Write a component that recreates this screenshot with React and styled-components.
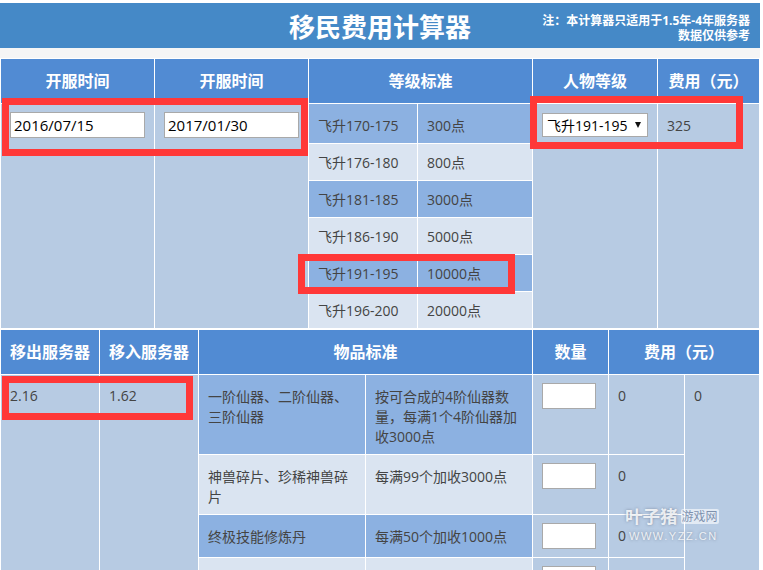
import React from "react";
import styled, { createGlobalStyle } from "styled-components";

const Global = createGlobalStyle`
  html, body { margin: 0; padding: 0; background: #fff; overflow: hidden; height: 570px; }
  body { font-family: "Open Sans", "Noto Sans CJK SC", sans-serif; font-size: 14px; color: #444; }
`;

const Page = styled.div`
  position: relative;
  width: 763px;
  height: 570px;
  overflow: hidden;
  padding-top: 3px;
  box-sizing: border-box;
`;

const Banner = styled.header`
  width: 760px;
  height: 45px;
  background: #4589c7;
  display: grid;
  grid-template-columns: 1fr auto 1fr;
  align-items: center;
  color: #fff;
`;

const Title = styled.h1`
  grid-column: 2;
  margin: 0;
  padding-top: 4px;
  font-size: 26px;
  line-height: 41px;
  font-weight: 700;
`;

const Note = styled.div`
  grid-column: 3;
  justify-self: end;
  padding: 4px 10px 0 0;
  font-size: 12px;
  line-height: 15px;
  font-weight: 700;
  text-align: right;
  white-space: nowrap;
`;

const Gap = styled.div`
  width: 760px;
  height: 10px;
  background: #f5f5f5;
`;

const Table = styled.table`
  width: 760px;
  table-layout: fixed;
  border-collapse: separate;
  border-spacing: 1px;
  background: #fff;
`;

const Head = styled.th`
  box-sizing: border-box;
  height: 44px;
  padding: 0 0 2px;
  background: #518bd3;
  color: #fff;
  font-size: 16px;
  font-weight: 700;
  text-align: center;
  white-space: nowrap;
`;

const Cell = styled.td`
  box-sizing: border-box;
  height: ${(p) => p.$h || 36}px;
  padding: ${(p) => p.$pt ?? 9}px 9px 0;
  vertical-align: top;
  line-height: 20px;
  background: ${(p) =>
    p.$tone === "dark" ? "#8cb1e1" : p.$tone === "light" ? "#dae4f1" : "#b7cbe3"};
`;

const FieldCell = styled.td`
  box-sizing: border-box;
  padding: 8px 9px 0;
  vertical-align: top;
  background: #b7cbe3;
`;

const Field = styled.input`
  display: block;
  box-sizing: border-box;
  width: ${(p) => p.$w}px;
  height: 26px;
  padding: 0 3px;
  margin: 0;
  border: 1px solid #a9a9a9;
  border-radius: 0;
  outline: none;
  background: #fff;
  color: #000;
  font-family: "Open Sans", "Noto Sans CJK SC", sans-serif;
  font-size: 15px;
`;

const SelectWrap = styled.div`
  position: relative;
  width: 106px;
  height: 24px;
  margin-top: 1px;
  &::after {
    content: "";
    position: absolute;
    right: 7px;
    top: 9px;
    border-left: 3.5px solid transparent;
    border-right: 3.5px solid transparent;
    border-top: 6px solid #111;
    pointer-events: none;
  }
`;

const Select = styled.select`
  appearance: none;
  display: block;
  box-sizing: border-box;
  width: 106px;
  height: 24px;
  padding: 0 0 0 4px;
  margin: 0;
  border: 1px solid #a9a9a9;
  border-radius: 0;
  background: #fff;
  color: #000;
  font-family: "Open Sans", "Noto Sans CJK SC", sans-serif;
  font-size: 14px;
`;

const Mark = styled.div`
  position: absolute;
  left: ${(p) => p.$x}px;
  top: ${(p) => p.$y}px;
  width: ${(p) => p.$w}px;
  height: ${(p) => p.$h}px;
  box-sizing: border-box;
  border: 7px solid #ff3838;
  pointer-events: none;
`;

const Watermark = styled.div`
  position: absolute;
  left: 625px;
  top: 506px;
  width: 96px;
  color: rgba(255, 255, 255, 0.82);
  text-shadow: 0 0 3px rgba(80, 90, 110, 0.55);
  pointer-events: none;
`;

const WatermarkTop = styled.div`
  display: flex;
  align-items: center;
  gap: 3px;
  height: 21px;
  font-size: 17.5px;
  line-height: 21px;
  font-weight: 700;
  white-space: nowrap;
`;

const WatermarkBadge = styled.span`
  flex: none;
  width: 38px;
  height: 15px;
  background: rgba(255, 255, 255, 0.6);
  color: rgba(120, 140, 170, 0.95);
  border-radius: 2px;
  font-size: 12px;
  line-height: 15px;
  font-weight: 400;
  text-align: center;
  text-shadow: none;
`;

const WatermarkUrl = styled.div`
  padding: 2px 0 0 4px;
  font-family: "Liberation Sans", sans-serif;
  font-size: 11px;
  line-height: 14px;
  letter-spacing: 1.55px;
  white-space: nowrap;
`;

const levels = [
  ["飞升170-175", "300点", 39, 12],
  ["飞升176-180", "800点", 36, 9],
  ["飞升181-185", "3000点", 36, 9],
  ["飞升186-190", "5000点", 36, 9],
  ["飞升191-195", "10000点", 36, 9],
  ["飞升196-200", "20000点", 36, 9],
];

const items = [
  ["一阶仙器、二阶仙器、三阶仙器", "按可合成的4阶仙器数量，每满1个4阶仙器加收3000点", 79],
  ["神兽碎片、珍稀神兽碎片", "每满99个加收3000点", 59],
  ["终极技能修炼丹", "每满50个加收1000点", 42],
  ["", "", 60],
];

const tone = (i) => (i % 2 === 0 ? "dark" : "light");

export default function App() {
  return (
    <Page>
      <Global />
      <Banner>
        <Title>移民费用计算器</Title>
        <Note>
          注：本计算器只适用于1.5年-4年服务器
          <br />
          数据仅供参考
        </Note>
      </Banner>
      <Gap />
      <Table>
        <colgroup>
          {[153, 153, 108, 114, 124, 101].map((w, i) => (
            <col key={i} width={w} />
          ))}
        </colgroup>
        <thead>
          <tr>
            <Head>开服时间</Head>
            <Head>开服时间</Head>
            <Head colSpan={2}>等级标准</Head>
            <Head>人物等级</Head>
            <Head>费用（元）</Head>
          </tr>
        </thead>
        <tbody>
          {levels.map(([name, pts, h, pt], i) => (
            <tr key={name}>
              {i === 0 && (
                <>
                  <FieldCell rowSpan={6}>
                    <Field $w={135} defaultValue="2016/07/15" />
                  </FieldCell>
                  <FieldCell rowSpan={6}>
                    <Field $w={135} defaultValue="2017/01/30" />
                  </FieldCell>
                </>
              )}
              <Cell $h={h} $pt={pt} $tone={tone(i)}>{name}</Cell>
              <Cell $h={h} $pt={pt} $tone={tone(i)}>{pts}</Cell>
              {i === 0 && (
                <>
                  <FieldCell rowSpan={6}>
                    <SelectWrap>
                      <Select defaultValue="飞升191-195">
                        {levels.map(([n]) => (
                          <option key={n}>{n}</option>
                        ))}
                      </Select>
                    </SelectWrap>
                  </FieldCell>
                  <Cell rowSpan={6} $pt={12}>325</Cell>
                </>
              )}
            </tr>
          ))}
        </tbody>
      </Table>
      <Table>
        <colgroup>
          {[98, 98, 166, 166, 75, 75, 74].map((w, i) => (
            <col key={i} width={w} />
          ))}
        </colgroup>
        <thead>
          <tr>
            <Head>移出服务器</Head>
            <Head>移入服务器</Head>
            <Head colSpan={2}>物品标准</Head>
            <Head>数量</Head>
            <Head colSpan={2}>费用（元）</Head>
          </tr>
        </thead>
        <tbody>
          {items.map(([name, rule, h], i) => (
            <tr key={i}>
              {i === 0 && (
                <>
                  <Cell rowSpan={4} $pt={11}>2.16</Cell>
                  <Cell rowSpan={4} $pt={11}>1.62</Cell>
                </>
              )}
              <Cell $h={h} $pt={12} $tone={tone(i)}>{name}</Cell>
              <Cell $h={h} $pt={12} $tone={tone(i)}>{rule}</Cell>
              <FieldCell>
                <Field $w={54} />
              </FieldCell>
              <Cell $h={h} $pt={11}>{i < 3 ? "0" : ""}</Cell>
              {i === 0 && <Cell rowSpan={4} $pt={11}>0</Cell>}
            </tr>
          ))}
        </tbody>
      </Table>

      <Mark $x={2} $y={98} $w={306} $h={58} />
      <Mark $x={530} $y={96} $w={213} $h={53} />
      <Mark $x={298} $y={254} $w={217} $h={40} />
      <Mark $x={2} $y={376} $w={191} $h={44} />

      <Watermark>
        <WatermarkTop>
          叶子猪<WatermarkBadge>游戏网</WatermarkBadge>
        </WatermarkTop>
        <WatermarkUrl>WWW.YZZ.CN</WatermarkUrl>
      </Watermark>
    </Page>
  );
}
